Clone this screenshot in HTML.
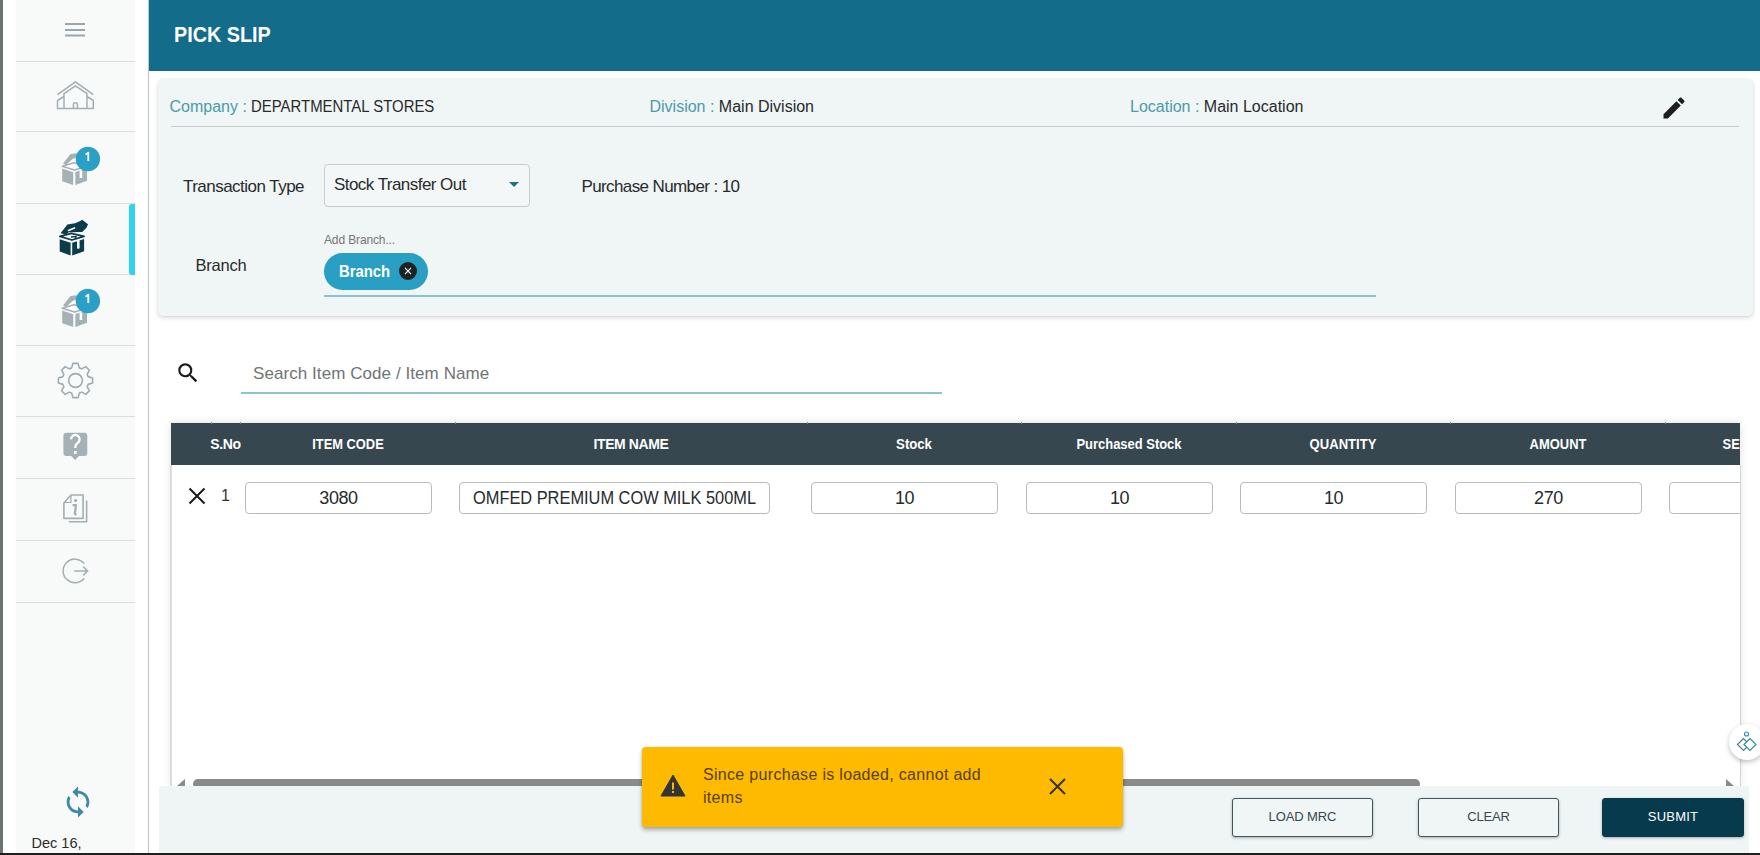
<!DOCTYPE html>
<html><head><meta charset="utf-8">
<style>
*{margin:0;padding:0;box-sizing:border-box}
html,body{width:1760px;height:855px;overflow:hidden;background:#fff;font-family:"Liberation Sans",sans-serif;color:#282b2d}
.a{position:absolute}
.t{position:absolute;white-space:nowrap;line-height:1}
#stripe{left:0;top:0;width:3px;height:855px;background:#6c7173}
#botbar{left:0;top:853px;width:1760px;height:2px;background:#1e1f1e}
#side{left:3px;top:0;width:145px;height:853px;background:#fff}
#panel{left:16px;top:0;width:119px;height:853px;background:#f8fafa}
.div{position:absolute;left:16px;width:119px;height:1px;background:#dcdcdc}
#vline{left:148px;top:0;width:1px;height:853px;background:#c3c7c9;box-shadow:0 0 1.5px rgba(0,0,0,.12)}
#hdr{left:149px;top:0;width:1611px;height:71px;background:#136c8a}
#card{left:158px;top:79px;width:1595px;height:237px;background:#f0f5f5;border-radius:5px;box-shadow:0 2px 4px rgba(0,0,0,.14),0 0 2px rgba(0,0,0,.08)}
.lbl{color:#4a9bab}
.inp{position:absolute;height:32px;top:482px;border:1px solid #b9bcbd;border-radius:4px;background:#fff}
.th{position:absolute;top:13.7px;color:#fff;font-weight:bold;font-size:14px;line-height:1;white-space:nowrap;text-align:center}
.btn{position:absolute;top:798px;width:141px;height:39px;border:1.5px solid #40555e;border-radius:3px;background:#f0f5f5;box-shadow:0 1px 3px rgba(0,0,0,.3)}
</style></head><body>
<div class="a" id="stripe"></div>
<div class="a" id="side"></div>
<div class="a" id="panel"></div>
<div class="div" style="top:61px"></div>
<div class="div" style="top:131px"></div>
<div class="div" style="top:203px"></div>
<div class="div" style="top:274px"></div>
<div class="div" style="top:345px"></div>
<div class="div" style="top:416px"></div>
<div class="div" style="top:478px"></div>
<div class="div" style="top:540px"></div>
<div class="div" style="top:602px"></div>
<div class="a" style="left:129px;top:204px;width:6px;height:71px;background:#2fd3f2;border-radius:3px 0 0 3px"></div>
<div class="a" id="vline"></div>
<!-- sidebar icons -->
<svg class="a" style="left:50px;top:10px" width="50" height="40" viewBox="0 0 50 40"><path d="M15 14H35M15 20H35M15 25.6H35" stroke="#9aa6ab" stroke-width="2"/></svg>
<svg class="a" style="left:50px;top:75px" width="50" height="40" viewBox="0 0 50 40" fill="none" stroke="#a3aeb2" stroke-width="1.5" stroke-linejoin="round"><path d="M7.5 19.6L25.5 6.8L43.3 19.6"/><path d="M14 33.4V18.7L25.5 10.8L37 18.7V33.4"/><path d="M14 21.5L7.5 25.5V33.4H43.3V25.5L37 21.5"/><path d="M23.4 33.4V29.8A2 2 0 0 1 27.4 29.8V33.4"/></svg>
<svg class="a" style="left:50px;top:140px" width="60" height="55" viewBox="0 0 60 55"><g fill="#a6b1b6"><path d="M12.2 28.6L23.2 32.2V45L12.2 41.2Z"/><path d="M25.4 32L37 28.5V40.7L25.4 45Z"/><path d="M13 23.5L20.5 14L26.5 13.2L29 16.5L22.5 19L16 25Z"/></g><path d="M12.2 26.3L24.2 22.8L37 26.3L24.5 30Z" fill="#fff" stroke="#a6b1b6" stroke-width="1.6" stroke-linejoin="round"/><rect x="29.6" y="30.5" width="2.6" height="7.5" fill="#fff"/><circle cx="37.9" cy="19" r="12.2" fill="#2b9fc5"/><path d="M35.6 14.6L38.3 12.6V21" fill="none" stroke="#fff" stroke-width="1.8" stroke-linejoin="round"/></svg>
<svg class="a" style="left:50px;top:282px" width="60" height="55" viewBox="0 0 60 55"><g fill="#a6b1b6"><path d="M12.2 28.6L23.2 32.2V45L12.2 41.2Z"/><path d="M25.4 32L37 28.5V40.7L25.4 45Z"/><path d="M13 23.5L20.5 14L26.5 13.2L29 16.5L22.5 19L16 25Z"/></g><path d="M12.2 26.3L24.2 22.8L37 26.3L24.5 30Z" fill="#fff" stroke="#a6b1b6" stroke-width="1.6" stroke-linejoin="round"/><rect x="29.6" y="30.5" width="2.6" height="7.5" fill="#fff"/><circle cx="37.9" cy="19" r="12.2" fill="#2b9fc5"/><path d="M35.6 14.6L38.3 12.6V21" fill="none" stroke="#fff" stroke-width="1.8" stroke-linejoin="round"/></svg>
<svg class="a" style="left:50px;top:210px" width="50" height="55" viewBox="0 0 50 55"><g fill="#0c3b4c"><path d="M10.6 23.2L17.4 14.5L25.1 13.2L30.2 10.9L32.2 9.7L38 14.2L36.7 17.4L32.2 21.9L18.7 22.2L16 24.5Z"/><path d="M9.7 29.3L20.6 32.8V45.4L9.7 41.5Z"/><path d="M22.2 32.8L34.1 29V41.2L22.2 45.4Z"/></g><path d="M18.5 20.5L24.5 18" stroke="#fff" stroke-width="1.6" stroke-linecap="round"/><path d="M9.9 26.4L21.2 23.4L34 26.4L21.9 30Z" fill="#fff" stroke="#0c3b4c" stroke-width="1.8" stroke-linejoin="round"/><path d="M21 27L26 26.5L25.5 28.5" fill="none" stroke="#0c3b4c" stroke-width="1.4"/><rect x="27" y="30.2" width="2.6" height="8.4" fill="#fff"/></svg>
<svg class="a" style="left:50px;top:355px" width="50" height="50" viewBox="0 0 50 50" fill="none" stroke="#9fabb0" stroke-width="1.6" stroke-linejoin="round"><path d="M21.64 12.88L22.94 8.39L28.06 8.39L29.36 12.88A13.2 13.2 0 0 1 31.70 13.85L35.79 11.59L39.41 15.21L37.15 19.30A13.2 13.2 0 0 1 38.12 21.64L42.61 22.94L42.61 28.06L38.12 29.36A13.2 13.2 0 0 1 37.15 31.70L39.41 35.79L35.79 39.41L31.70 37.15A13.2 13.2 0 0 1 29.36 38.12L28.06 42.61L22.94 42.61L21.64 38.12A13.2 13.2 0 0 1 19.30 37.15L15.21 39.41L11.59 35.79L13.85 31.70A13.2 13.2 0 0 1 12.88 29.36L8.39 28.06L8.39 22.94L12.88 21.64A13.2 13.2 0 0 1 13.85 19.30L11.59 15.21L15.21 11.59L19.30 13.85A13.2 13.2 0 0 1 21.64 12.88Z"/><circle cx="25.5" cy="25.5" r="6.9"/></svg>
<svg class="a" style="left:55px;top:425px" width="40" height="40" viewBox="0 0 40 40"><path d="M11.4 7.7H29.3A3 3 0 0 1 32.3 10.7V28.1A3 3 0 0 1 29.3 31.1H24L20.1 35L16.2 31.1H11.4A3 3 0 0 1 8.4 28.1V10.7A3 3 0 0 1 11.4 7.7Z" fill="#a6b1b6"/><path d="M16 14.3A4.3 4.3 0 1 1 22.8 17.8C21 19 20.3 20.2 20.3 22.3V23" fill="none" stroke="#fff" stroke-width="2.3"/><rect x="19" y="26" width="2.6" height="2.8" fill="#fff"/></svg>
<svg class="a" style="left:55px;top:488px" width="40" height="40" viewBox="0 0 40 40" fill="none" stroke="#a3aeb2" stroke-width="1.6" stroke-linejoin="round"><path d="M8.9 15L16 7H28.1V30.4H8.9Z"/><path d="M16 7.5V14.5H9.2" stroke-width="1.2"/><path d="M31.6 12.4V33.7H13.8"/><circle cx="20.6" cy="12.5" r="1.6" fill="#a3aeb2" stroke="none"/><path d="M17.6 17.2H21L19.8 25.5Q19.6 26.6 21.6 26.2" stroke-width="2.2"/></svg>
<svg class="a" style="left:55px;top:551px" width="40" height="40" viewBox="0 0 40 40" fill="none" stroke="#a3aeb2" stroke-width="1.5"><path d="M29.2 12.6A11.8 11.8 0 1 0 29.2 27.2"/><path d="M19.2 20H32.2M28.2 15.6L32.6 20L28.2 24.4"/></svg>
<svg class="a" style="left:61px;top:785px" width="34" height="34" viewBox="0 0 24 24"><g transform="scale(1)"><path fill="#3b8ba5" d="M12 4V1L8 5l4 4V6c3.31 0 6 2.69 6 6 0 1.01-.25 1.97-.7 2.8l1.46 1.46C19.54 15.03 20 13.57 20 12c0-4.42-3.58-8-8-8zm0 14c-3.31 0-6-2.69-6-6 0-1.01.25-1.97.7-2.8L5.24 7.74C4.46 8.97 4 10.43 4 12c0 4.42 3.58 8 8 8v3l4-4-4-4v3z"/></g></svg>
<div class="t" style="left:31.5px;top:836.3px;font-size:14.5px;color:#2b2b2b">Dec 16,</div>


<!-- header -->
<div class="a" id="hdr"></div>
<div class="t" style="left:174px;top:24.2px;font-size:22px;font-weight:bold;color:#fff;transform:scaleX(0.9);transform-origin:0 0">PICK SLIP</div>

<!-- card -->
<div class="a" id="card"></div>
<div class="t" style="left:169.5px;top:99.3px;font-size:16px;color:#272a2c"><span class="lbl">Company :</span> <span style="display:inline-block;transform:scaleX(0.933);transform-origin:0 0">DEPARTMENTAL STORES</span></div>
<div class="t" style="left:649.5px;top:99.3px;font-size:16px;color:#272a2c"><span class="lbl">Division :</span> Main Division</div>
<div class="t" style="left:1130px;top:99.3px;font-size:16px;color:#272a2c"><span class="lbl">Location :</span> Main Location</div>
<div class="a" style="left:171px;top:126px;width:1568px;height:1px;background:#c8cbcb"></div>

<div class="t" style="left:183px;top:177.8px;font-size:17px;letter-spacing:-0.53px">Transaction Type</div>
<div class="a" style="left:324px;top:164px;width:206px;height:43px;border:1px solid #c9cccd;border-radius:4px;background:#f3f7f7"></div>
<div class="t" style="left:334px;top:176.1px;font-size:17px;letter-spacing:-0.55px">Stock Transfer Out</div>
<div class="a" style="left:509px;top:182px;width:0;height:0;border-left:5.5px solid transparent;border-right:5.5px solid transparent;border-top:5.5px solid #1d6f8c"></div>
<div class="t" style="left:581.5px;top:178.1px;font-size:17px;letter-spacing:-0.61px">Purchase Number : 10</div>

<div class="t" style="left:324px;top:233.6px;font-size:12px;letter-spacing:-0.13px;color:#777">Add Branch...</div>
<div class="t" style="left:195.5px;top:256.8px;font-size:16.5px;letter-spacing:-0.24px">Branch</div>
<div class="a" style="left:324px;top:253px;width:104px;height:37px;border-radius:18.5px;background:#2a9fc4"></div>
<div class="t" style="left:338.5px;top:263px;font-size:16.5px;font-weight:bold;color:#fff;transform:scaleX(0.9);transform-origin:0 0">Branch</div>
<svg class="a" style="left:399px;top:262px" width="18" height="18" viewBox="0 0 18 18"><circle cx="9" cy="9" r="9" fill="#1f2223"/><path d="M6 6L12 12M12 6L6 12" stroke="#e8f4f8" stroke-width="1.1"/></svg>
<div class="a" style="left:324px;top:295px;width:1052px;height:2px;background:#8ec2cc"></div>

<!-- search -->
<svg class="a" style="left:175px;top:359.5px" width="26" height="26" viewBox="0 0 24 24"><path fill="#1a1a1a" d="M15.5 14h-.79l-.28-.27A6.47 6.47 0 0 0 16 9.5 6.5 6.5 0 1 0 9.5 16c1.61 0 3.09-.59 4.23-1.57l.27.28v.79l5 4.99L20.49 19l-4.99-5zm-6 0C7.01 14 5 11.99 5 9.5S7.01 5 9.5 5 14 7.01 14 9.5 11.99 14 9.5 14z"/></svg>
<div class="t" style="left:253px;top:364.6px;font-size:17px;letter-spacing:0.07px;color:#6f7475">Search Item Code / Item Name</div>
<div class="a" style="left:241px;top:392px;width:701px;height:2px;background:#8ec2cc"></div>

<!-- table -->
<div class="a" style="left:171px;top:423px;width:1569px;height:363px;background:#fff;box-shadow:0 0 8px rgba(0,0,0,.13)"></div>
<div class="a" style="left:170px;top:465px;width:2px;height:321px;background:#dcdcdc"></div>
<div class="a" style="left:1740px;top:465px;width:1px;height:321px;background:#cdd6d8"></div>
<div class="a" style="left:171px;top:423px;width:1569px;height:42px;background:#36474f"></div>
<div class="a" style="left:171px;top:423px;width:1569px;height:42px;overflow:hidden">
  <div class="th" style="left:-45.5px;width:200px;letter-spacing:-0.33px">S.No</div>
  <div class="th" style="left:76.69999999999999px;width:200px;transform:scaleX(0.918)">ITEM CODE</div>
  <div class="th" style="left:360px;width:200px;letter-spacing:-0.4px">ITEM NAME</div>
  <div class="th" style="left:643px;width:200px;transform:scaleX(0.938)">Stock</div>
  <div class="th" style="left:857.5px;width:200px;transform:scaleX(0.925)">Purchased Stock</div>
  <div class="th" style="left:1072px;width:200px;transform:scaleX(0.933)">QUANTITY</div>
  <div class="th" style="left:1286.7px;width:200px;transform:scaleX(0.925)">AMOUNT</div>
  <div class="th" style="left:1501px;width:200px;transform:scaleX(0.92)">SELLING PRICE</div>
</div>
<div class="a" style="left:211px;top:422px;width:1px;height:2px;background:#7c8b91"></div>
<div class="a" style="left:240px;top:422px;width:1px;height:2px;background:#7c8b91"></div>
<div class="a" style="left:455px;top:422px;width:1px;height:2px;background:#7c8b91"></div>
<div class="a" style="left:807px;top:422px;width:1px;height:2px;background:#7c8b91"></div>
<div class="a" style="left:1021px;top:422px;width:1px;height:2px;background:#7c8b91"></div>
<div class="a" style="left:1236px;top:422px;width:1px;height:2px;background:#7c8b91"></div>
<div class="a" style="left:1450px;top:422px;width:1px;height:2px;background:#7c8b91"></div>
<div class="a" style="left:1665px;top:422px;width:1px;height:2px;background:#7c8b91"></div>
<svg class="a" style="left:187px;top:486px" width="20" height="20" viewBox="0 0 20 20"><path d="M2.5 2.5L17.5 17.5M17.5 2.5L2.5 17.5" stroke="#1a1a1a" stroke-width="2"/></svg>
<div class="t" style="left:221px;top:488.3px;font-size:16px;color:#333">1</div>
<div class="a" style="left:171px;top:465px;width:1569px;height:60px;overflow:hidden">
  <div class="inp" style="left:74px;top:17px;width:187px"></div>
  <div class="t" style="left:74px;width:187px;text-align:center;top:24.3px;font-size:18px;letter-spacing:-0.4px;color:#262b2d">3080</div>
  <div class="inp" style="left:288px;top:17px;width:311px"></div>
  <div class="t" style="left:302px;top:24.3px;font-size:18px;color:#262b2d;transform:scaleX(0.91);transform-origin:0 0">OMFED PREMIUM COW MILK 500ML</div>
  <div class="inp" style="left:640px;top:17px;width:187px"></div>
  <div class="t" style="left:640px;width:187px;text-align:center;top:24.3px;font-size:18px;letter-spacing:-0.4px;color:#262b2d">10</div>
  <div class="inp" style="left:855px;top:17px;width:187px"></div>
  <div class="t" style="left:855px;width:187px;text-align:center;top:24.3px;font-size:18px;letter-spacing:-0.4px;color:#262b2d">10</div>
  <div class="inp" style="left:1069px;top:17px;width:187px"></div>
  <div class="t" style="left:1069px;width:187px;text-align:center;top:24.3px;font-size:18px;letter-spacing:-0.4px;color:#262b2d">10</div>
  <div class="inp" style="left:1284px;top:17px;width:187px"></div>
  <div class="t" style="left:1284px;width:187px;text-align:center;top:24.3px;font-size:18px;letter-spacing:-0.4px;color:#262b2d">270</div>
  <div class="inp" style="left:1498px;top:17px;width:187px"></div>
</div>


<!-- scrollbar -->
<div class="a" style="left:193px;top:779px;width:1227px;height:10px;background:#8a8a8a;border-radius:5px"></div>
<div class="a" style="left:177px;top:779px;width:0;height:0;border-top:7px solid transparent;border-right:8px solid #8a8a8a"></div>
<div class="a" style="left:1726px;top:779px;width:0;height:0;border-top:7px solid transparent;border-left:8px solid #8a8a8a"></div>

<!-- bottom action bar -->
<div class="a" style="left:159px;top:786px;width:1590px;height:67px;background:#eff4f4"></div>
<div class="btn" style="left:1232px"></div>
<div class="t" style="left:1232px;width:141px;text-align:center;top:809.6px;font-size:13px;letter-spacing:-0.1px;color:#37474f">LOAD MRC</div>
<div class="btn" style="left:1418px"></div>
<div class="t" style="left:1418px;width:141px;text-align:center;top:809.6px;font-size:13px;letter-spacing:-0.15px;color:#37474f">CLEAR</div>
<div class="btn" style="left:1602px;width:142px;background:#063a4c;border-color:#063a4c"></div>
<div class="t" style="left:1602px;width:142px;text-align:center;top:809.6px;font-size:13px;letter-spacing:0.2px;color:#fff">SUBMIT</div>

<!-- floating circle -->
<div class="a" style="left:1729px;top:724px;width:36px;height:36px;border-radius:18px;background:#fff;box-shadow:0 2px 5px rgba(0,0,0,.25)"></div>
<svg class="a" style="left:1734px;top:730px" width="26" height="26" viewBox="0 0 26 26"><circle cx="12.5" cy="4" r="2" fill="none" stroke="#2f8ea6" stroke-width="1.1"/><path d="M9.5 8.5L3.5 14.5L9.5 20.5L15.5 14.5Z" fill="none" stroke="#4b7f8d" stroke-width="1.2"/><path d="M16 8.5L10 14.5L16 20.5L22 14.5Z" fill="#fff" stroke="#2f8ea6" stroke-width="1.2"/></svg>

<!-- toast -->
<div class="a" style="left:642px;top:747px;width:481px;height:80px;background:#fdba00;border-radius:4px;box-shadow:0 3px 4px rgba(0,0,0,.3),0 0 2px rgba(0,0,0,.12)"></div>
<svg class="a" style="left:660px;top:774px" width="26" height="23" viewBox="0 0 26 23"><path d="M13 1L25 22H1Z" fill="#343434" stroke="#343434" stroke-width="1" stroke-linejoin="round"/><rect x="12" y="8.5" width="2" height="7" fill="#fdba00"/><rect x="12" y="17" width="2" height="2" fill="#fdba00"/></svg>
<div class="t" style="left:703px;top:767px;font-size:16px;letter-spacing:0.31px;color:#573f08">Since purchase is loaded, cannot add</div>
<div class="t" style="left:703px;top:789.7px;font-size:16px;letter-spacing:0.31px;color:#573f08">items</div>
<svg class="a" style="left:1049px;top:778px" width="17" height="17" viewBox="0 0 17 17"><path d="M1 1L16 16M16 1L1 16" stroke="#333" stroke-width="2"/></svg>

<svg class="a" style="left:1660px;top:94px" width="28" height="28" viewBox="0 0 24 24"><path fill="#1e1e1e" d="M3 17.25V21h3.75L17.81 9.94l-3.75-3.75L3 17.25zM20.71 7.04c.39-.39.39-1.02 0-1.41l-2.34-2.34c-.39-.39-1.02-.39-1.41 0l-1.83 1.83 3.75 3.75 1.83-1.83z"/></svg>
<div class="a" id="botbar"></div>
</body></html>
